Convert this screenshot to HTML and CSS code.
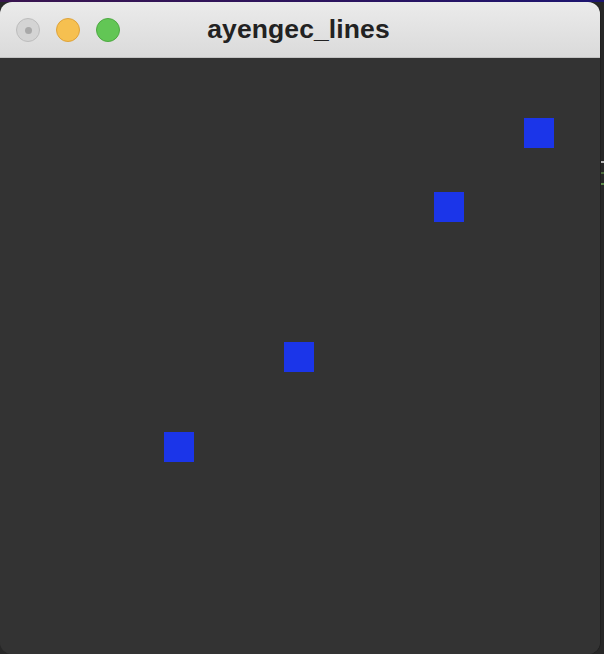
FILE: index.html
```html
<!DOCTYPE html>
<html>
<head>
<meta charset="utf-8">
<link rel="stylesheet" href="styles.css">
</head>
<body>
<div class="desktop">
  <div class="topstrip"></div>
  <span class="mark mark-a"></span>
  <span class="mark mark-b"></span>
  <span class="mark mark-c"></span>
  <div class="window">
    <div class="titlebar">
      <div class="lights">
        <span class="light close"><span class="dot"></span></span>
        <span class="light min"></span>
        <span class="light max"></span>
      </div>
      <div class="title">ayengec_lines</div>
    </div>
    <div class="canvas">
      <span class="sq" style="left:524px;top:60px"></span>
      <span class="sq" style="left:434px;top:134px"></span>
      <span class="sq" style="left:284px;top:284px"></span>
      <span class="sq" style="left:164px;top:374px"></span>
    </div>
  </div>
</div>
</body>
</html>
```
FILE: styles.css
```css
html, body {
  margin: 0;
  padding: 0;
  width: 604px;
  height: 654px;
  overflow: hidden;
  background: #282828;
}
.desktop {
  position: relative;
  width: 604px;
  height: 654px;
  background: #272727;
}
.topstrip {
  height: 2px;
  background: linear-gradient(90deg, #3a1550, #2a1460 60%, #1d1570);
}
.mark {
  position: absolute;
  left: 601px;
  width: 3px;
  height: 2px;
}
.mark-a { top: 161px; background: #b8b8b8; }
.mark-b { top: 172px; background: #4c6a3c; }
.mark-c { top: 183px; background: #5d8a4a; }
.window {
  width: 600px;
  height: 652px;
  border-radius: 12px;
  overflow: hidden;
  display: flex;
  flex-direction: column;
  background: #333333;
  box-shadow: 1px 0 0 #1f1f1f;
}
.titlebar {
  position: relative;
  height: 55px;
  flex: none;
  background: linear-gradient(#ebebeb, #dadada);
  border-bottom: 1px solid #c2c2c2;
  box-shadow: 0 1px 0 #5a5a5a;
  display: flex;
  align-items: center;
}
.lights {
  display: flex;
  gap: 16px;
  padding-left: 16px;
  padding-top: 1px;
}
.light {
  width: 22px;
  height: 22px;
  border-radius: 50%;
  display: flex;
  align-items: center;
  justify-content: center;
}
.close {
  background: #d4d4d4;
  border: 1px solid #bdbdbd;
}
.close .dot {
  width: 7px;
  height: 7px;
  border-radius: 50%;
  background: #a9a9a9;
}
.min {
  background: #f6c050;
  border: 1px solid #dea33b;
}
.max {
  background: #62c655;
  border: 1px solid #4ea942;
}
.title {
  position: absolute;
  left: 0;
  right: 3px;
  top: 12px;
  text-align: center;
  font-family: "Liberation Sans", Arial, sans-serif;
  font-weight: bold;
  font-size: 26.5px;
  color: #222222;
  letter-spacing: 0.1px;
}
.canvas {
  position: relative;
  flex: 1;
  background: #333333;
}
.sq {
  position: absolute;
  width: 30px;
  height: 30px;
  background: #1b35e9;
}
```
